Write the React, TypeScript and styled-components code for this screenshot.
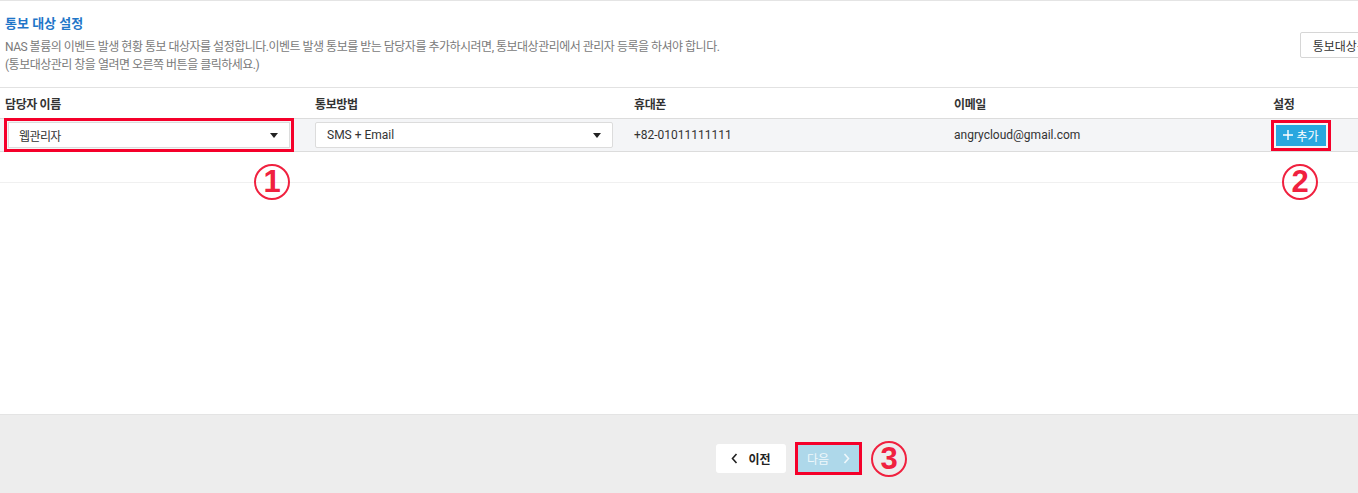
import React from "react";
import styled, { createGlobalStyle } from "styled-components";

const Global = createGlobalStyle`
  html, body { margin: 0; padding: 0; background: #fff; }
  body { font-family: Roboto, "Noto Sans CJK KR", "Noto Sans", sans-serif; color: #333; }
  * { box-sizing: border-box; }
`;

const Page = styled.div`
  width: 1358px;
  height: 493px;
  display: flex;
  flex-direction: column;
  overflow: hidden;
  position: relative;
`;

const Content = styled.div`
  flex: 1;
  border-top: 1px solid #e4e4e4;
  padding-top: 14px;
`;

const Intro = styled.div`
  display: flex;
  justify-content: space-between;
  align-items: flex-start;
  padding-left: 5px;
`;

const Title = styled.h2`
  margin: 0 0 5px;
  font-size: 13px;
  font-weight: 700;
  color: #1f76c8;
  line-height: 18px;
`;

const Desc = styled.p`
  margin: 0;
  font-size: 12px;
  line-height: 18px;
  color: #7a7a7a;
  letter-spacing: -0.5px;
`;

const OutlineButton = styled.button`
  margin-top: 17px;
  height: 26px;
  padding: 0 12px;
  border: 1px solid #d6d6d6;
  border-radius: 2px;
  background: #fff;
  font-family: inherit;
  font-size: 12px;
  color: #333;
  white-space: nowrap;
  margin-right: -34px;
`;

const Table = styled.div`
  margin-top: 13px;
  border-top: 1px solid #e2e2e2;
  display: grid;
  grid-template-columns: 310px 319px 320px 319px 1fr;
`;

const HeadCell = styled.div`
  height: 30px;
  padding-left: 5px;
  display: flex;
  align-items: center;
  font-size: 12px;
  font-weight: 700;
  color: #333;
  letter-spacing: -0.4px;
`;

const Cell = styled.div<{ $indent?: number }>`
  height: 34px;
  background: #f4f5f7;
  border-top: 1px solid #dcdcdc;
  border-bottom: 1px solid #dcdcdc;
  display: flex;
  align-items: center;
  padding-left: ${(p) => p.$indent ?? 5}px;
  font-size: 12px;
  color: #333;
`;

const EmptyCell = styled.div`
  height: 31px;
  border-bottom: 1px solid #f0f0f0;
`;

const Select = styled.div<{ $width: number; $marked?: boolean }>`
  width: ${(p) => p.$width}px;
  height: 26px;
  background: #fff;
  border: 1px solid #dcdcdc;
  border-radius: ${(p) => (p.$marked ? 0 : 2)}px;
  display: flex;
  align-items: center;
  justify-content: space-between;
  padding: 0 11px 0 ${(p) => (p.$marked ? 10 : 11)}px;
  font-size: 12px;
  color: #333;
  letter-spacing: ${(p) => (p.$marked ? "-0.6px" : "0")};
  ${(p) => (p.$marked ? "outline: 3px solid #f5002a; outline-offset: 1px;" : "")}
`;

const Caret = styled.span`
  width: 0;
  height: 0;
  border-left: 4px solid transparent;
  border-right: 4px solid transparent;
  border-top: 5px solid #222;
`;

const AddButton = styled.button`
  height: 21px;
  width: 50px;
  padding: 0;
  border: none;
  background: #29a7df;
  color: #fff;
  font-family: inherit;
  font-size: 12px;
  display: flex;
  align-items: center;
  justify-content: center;
  gap: 3px;
  outline: 3px solid #f5002a;
  outline-offset: 2px;
`;

const Footer = styled.div`
  height: 79px;
  background: #ededed;
  border-top: 1px solid #e4e4e4;
  display: flex;
  justify-content: center;
  align-items: center;
  gap: 11px;
  padding-left: 265px;
  padding-top: 9px;
`;

const NavButton = styled.button<{ $primary?: boolean }>`
  height: 29px;
  width: ${(p) => (p.$primary ? 63 : 70)}px;
  border: none;
  border-radius: ${(p) => (p.$primary ? 0 : 3)}px;
  background: ${(p) => (p.$primary ? "#aed8ea" : "#fff")};
  color: ${(p) => (p.$primary ? "#eef7fb" : "#222")};
  font-family: inherit;
  font-size: 12px;
  font-weight: ${(p) => (p.$primary ? 400 : 700)};
  display: flex;
  align-items: center;
  justify-content: center;
  gap: ${(p) => (p.$primary ? 14 : 10)}px;
  ${(p) => (p.$primary ? "outline: 3px solid #f5002a; outline-offset: -1px; box-shadow: inset 0 0 0 2px #aed8ea;" : "")}
`;

const Marker = styled.span<{ $x?: number; $y?: number; $inline?: boolean }>`
  position: ${(p) => (p.$inline ? "static" : "absolute")};
  left: ${(p) => p.$x ?? 0}px;
  top: ${(p) => p.$y ?? 0}px;
  width: 36px;
  height: 36px;
  flex: none;
  border: 2.5px solid #f0213f;
  border-radius: 50%;
  color: #f0213f;
  font-family: "Liberation Sans", Arial, sans-serif;
  font-weight: 700;
  font-size: 31px;
  line-height: 31px;
  text-align: center;
`;

const Chevron = ({ dir, color }: { dir: "l" | "r"; color: string }) => (
  <svg width="7" height="11" viewBox="0 0 7 11">
    <path
      d={dir === "l" ? "M5.5 1 L1.5 5.5 L5.5 10" : "M1.5 1 L5.5 5.5 L1.5 10"}
      fill="none"
      stroke={color}
      strokeWidth="1.6"
    />
  </svg>
);

const Plus = () => (
  <svg width="10" height="10" viewBox="0 0 10 10">
    <path d="M5 0 V10 M0 5 H10" stroke="#fff" strokeWidth="1.4" />
  </svg>
);

export default function App() {
  return (
    <>
      <Global />
      <Page>
        <Content>
          <Intro>
            <div>
              <Title>통보 대상 설정</Title>
              <Desc>
                NAS 볼륨의 이벤트 발생 현황 통보 대상자를 설정합니다.이벤트 발생 통보를 받는 담당자를 추가하시려면, 통보대상관리에서 관리자 등록을 하셔야 합니다.
              </Desc>
              <Desc>(통보대상관리 창을 열려면 오른쪽 버튼을 클릭하세요.)</Desc>
            </div>
            <OutlineButton>통보대상관리</OutlineButton>
          </Intro>
          <Table>
            <HeadCell>담당자 이름</HeadCell>
            <HeadCell>통보방법</HeadCell>
            <HeadCell>휴대폰</HeadCell>
            <HeadCell>이메일</HeadCell>
            <HeadCell>설정</HeadCell>
            <Cell $indent={8}>
              <Select $width={282} $marked>
                웹관리자
                <Caret />
              </Select>
            </Cell>
            <Cell>
              <Select $width={298}>
                SMS + Email
                <Caret />
              </Select>
            </Cell>
            <Cell>+82-01011111111</Cell>
            <Cell>angrycloud@gmail.com</Cell>
            <Cell $indent={8}>
              <AddButton>
                <Plus />
                추가
              </AddButton>
            </Cell>
            <EmptyCell />
            <EmptyCell />
            <EmptyCell />
            <EmptyCell />
            <EmptyCell />
          </Table>
        </Content>
        <Footer>
          <NavButton>
            <Chevron dir="l" color="#222" />
            이전
          </NavButton>
          <NavButton $primary>
            다음
            <Chevron dir="r" color="#eef7fb" />
          </NavButton>
          <Marker $inline>3</Marker>
        </Footer>
        <Marker $x={254} $y={164}>1</Marker>
        <Marker $x={1282} $y={164}>2</Marker>
      </Page>
    </>
  );
}
